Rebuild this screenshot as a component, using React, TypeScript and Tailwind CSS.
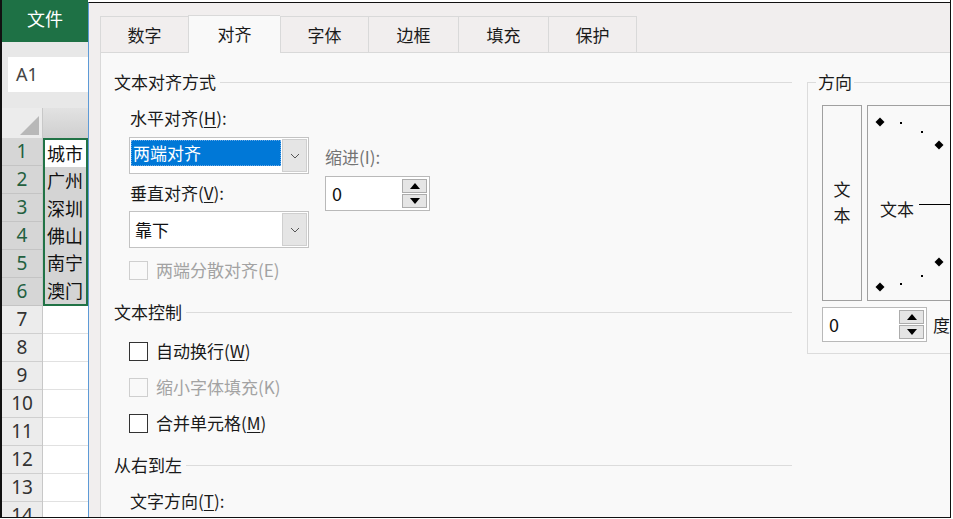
const rows = [
  { n: 1, text: '城市' },
  { n: 2, text: '广州' },
  { n: 3, text: '深圳' },
  { n: 4, text: '佛山' },
  { n: 5, text: '南宁' },
  { n: 6, text: '澳门' },
]
const emptyRows = [7, 8, 9, 10, 11, 12, 13, 14]
const tabs = [
  { label: '数字', w: 'w-[88px]' },
  { label: '对齐', w: 'w-[92px]', active: true },
  { label: '字体', w: 'w-[88px]' },
  { label: '边框', w: 'w-[90px]' },
  { label: '填充', w: 'w-[90px]' },
  { label: '保护', w: 'w-[89px]', last: true },
]

function Chevron() {
  return (
    <svg width="10" height="6" viewBox="0 0 10 6" fill="none">
      <path d="M1 1l4 4 4-4" stroke="#555" strokeWidth="1" />
    </svg>
  )
}

function Combo({ value, selected }: { value: string; selected?: boolean }) {
  return (
    <div className="flex w-[180px] h-[37px] border border-[#c3c3c3] bg-white p-[1px]">
      <div className="flex-1 flex items-center pr-[1px]">
        {selected ? (
          <div className="flex-1 h-[26px] -mt-[5px] bg-[#0078d7] text-white flex items-center pl-[2px] outline outline-1 outline-dotted outline-[#6aa9e6] -outline-offset-1">
            {value}
          </div>
        ) : (
          <span className="pl-[4px] text-[#111]">{value}</span>
        )}
      </div>
      <div className="w-[25px] h-full bg-[#e5e5e5] border border-[#cfcfcf] flex items-center justify-center">
        <Chevron />
      </div>
    </div>
  )
}

function Spin({ className }: { className: string }) {
  return (
    <div className={`flex h-[35px] border border-[#b9b9b9] bg-white p-[1px] ${className}`}>
      <span className="flex-1 pl-[5px] flex items-center text-[18px] text-[#111]">0</span>
      <div className="w-[25px] flex flex-col gap-px mr-[1px] py-[1px]">
        <div className="flex-1 bg-[#e5e5e5] border border-[#acacac] flex items-center justify-center">
          <svg width="10" height="6" viewBox="0 0 10 6"><path d="M0 6L5 0l5 6z" fill="#000" /></svg>
        </div>
        <div className="flex-1 bg-[#e5e5e5] border border-[#acacac] flex items-center justify-center">
          <svg width="10" height="6" viewBox="0 0 10 6"><path d="M0 0l5 6 5-6z" fill="#000" /></svg>
        </div>
      </div>
    </div>
  )
}

function Check({ disabled, children }: { disabled?: boolean; children: React.ReactNode }) {
  return (
    <div className="flex items-center h-[24px] ml-[15px] gap-[8px]">
      <div className={`w-[19px] h-[19px] border ${disabled ? 'border-[#cfcfcf]' : 'border-[#333] bg-white'}`} />
      <span className={disabled ? 'text-[#a3a3a3]' : 'text-[#1a1a1a]'}>{children}</span>
    </div>
  )
}

function Section({ title, className }: { title: string; className: string }) {
  return (
    <div className={`flex items-center h-[24px] ${className}`}>
      <span>{title}</span>
      <div className="flex-1 h-px bg-[#dcdcdc] ml-[4px]" />
    </div>
  )
}

function Diamond({ x, y }: { x: number; y: number }) {
  return <polygon points={`${x},${y - 4.5} ${x + 4.5},${y} ${x},${y + 4.5} ${x - 4.5},${y}`} fill="#000" />
}

export default function App() {
  return (
    <div className="w-[953px] h-[519px] overflow-hidden bg-white font-['Noto_Sans_CJK_SC',sans-serif] text-[17px] text-[#1a1a1a]">
      <div className="flex w-[951px] h-[518px] border-l-2 border-r border-b border-[#111]">
        {/* spreadsheet behind the dialog */}
        <div className="w-[86px] shrink-0 flex flex-col bg-white overflow-hidden">
          <div className="h-[42px] shrink-0 bg-[#1e7145] text-white text-[18px] flex items-center justify-center pb-[6px]">文件</div>
          <div className="h-[66px] shrink-0 bg-[#e8e8e8] pt-[15px] pl-[6px]">
            <div className="h-[35px] bg-white flex items-center pl-[8px] text-[18px] text-[#444] font-['Noto_Sans',sans-serif]">A1</div>
          </div>
          <div className="flex h-[30px] shrink-0">
            <div className="w-[41px] bg-[#ececec] border-r border-[#c8c8c8] flex items-end justify-end p-[3px]">
              <svg width="19" height="19" viewBox="0 0 19 19"><path d="M19 0V19H0z" fill="#b8b8b8" /></svg>
            </div>
            <div className="flex-1 bg-gradient-to-b from-[#e2e2e2] to-[#cfcfcf]" />
          </div>
          <div className="flex shrink-0 font-['Noto_Sans',sans-serif]">
            <div className="w-[41px] flex flex-col border-r border-[#c8c8c8]">
              {rows.map((r) => (
                <div key={r.n} className="h-[28px] shrink-0 bg-[#d6d6d6] border-b border-[#c4c4c4] text-[#23603f] text-[19px] flex items-center justify-center">{r.n}</div>
              ))}
              {emptyRows.map((n) => (
                <div key={n} className="h-[28px] shrink-0 bg-[#ececec] border-b border-[#cfcfcf] text-[#333] text-[19px] flex items-center justify-center">{n}</div>
              ))}
            </div>
            <div className="flex-1 flex flex-col">
              <div className="h-[168px] shrink-0 border-2 border-[#217346] flex flex-col">
                {rows.map((r) => (
                  <div key={r.n} className={`flex-1 flex items-center pl-[2px] text-[18px] text-[#111] font-['Noto_Sans_CJK_SC',sans-serif] ${r.n === 1 ? 'bg-white' : 'bg-[#d4d4d4]'}`}>{r.text}</div>
                ))}
              </div>
              {emptyRows.map((n) => (
                <div key={n} className="h-[28px] shrink-0 border-b border-[#e1e1e1]" />
              ))}
            </div>
          </div>
        </div>

        {/* format cells dialog */}
        <div className="flex-1 flex flex-col pt-[2px] bg-white min-w-0">
          <div className="flex-1 flex flex-col border-t border-[#111] border-l border-l-[#5d9ad6] bg-[#f1eeee] min-h-0">
            <div className="flex items-end pl-[11px] pt-[11px] h-[49px] shrink-0">
              {tabs.map((t) => (
                <div
                  key={t.label}
                  className={`${t.w} flex items-center justify-center border-l border-t border-[#d9d9d9] ${t.last ? 'border-r' : ''} ${t.active ? 'h-[38px] bg-[#f9f9f9] relative z-10 -mb-px pb-[2px]' : 'h-[36px] bg-[#f1eeee]'}`}
                >
                  {t.label}
                </div>
              ))}
            </div>
            <div className="flex-1 flex ml-[11px] bg-[#f9f9f9] border-t border-l border-[#d9d9d9] overflow-hidden">
              <div className="w-[691px] shrink-0 pl-[13px] flex flex-col">
                <Section title="文本对齐方式" className="mt-[17px]" />
                <div className="mt-[12px] ml-[16px] h-[24px] flex items-center">
                  水平对齐(<span className="underline underline-offset-2">H</span>):
                </div>
                <div className="flex mt-[7px] ml-[15px]">
                  <div className="flex flex-col">
                    <Combo value="两端对齐" selected />
                    <div className="mt-[7px] ml-[1px] h-[24px] flex items-center">
                      垂直对齐(<span className="underline underline-offset-2">V</span>):
                    </div>
                    <div className="mt-[6px]">
                      <Combo value="靠下" />
                    </div>
                  </div>
                  <div className="ml-[16px] flex flex-col">
                    <div className="mt-[8px] h-[24px] flex items-center text-[#747474]">缩进(I):</div>
                    <Spin className="mt-[7px] w-[105px]" />
                  </div>
                </div>
                <div className="mt-[10px]">
                  <Check disabled>两端分散对齐(E)</Check>
                </div>
                <Section title="文本控制" className="mt-[18px]" />
                <div className="mt-[15px]">
                  <Check>
                    自动换行(<span className="underline underline-offset-2">W</span>)
                  </Check>
                </div>
                <div className="mt-[12px]">
                  <Check disabled>缩小字体填充(K)</Check>
                </div>
                <div className="mt-[12px]">
                  <Check>
                    合并单元格(<span className="underline underline-offset-2">M</span>)
                  </Check>
                </div>
                <Section title="从右到左" className="mt-[18px]" />
                <div className="mt-[12px] ml-[16px] h-[24px] flex items-center">
                  文字方向(<span className="underline underline-offset-2">T</span>):
                </div>
              </div>

              <fieldset className="ml-[15px] mt-[17px] w-[220px] shrink-0 h-[284px] border border-[#dcdcdc] self-start">
                <legend className="ml-[8px] px-[2px] h-[24px] leading-[24px]">方向</legend>
                <div className="pl-[14px]">
                  <div className="flex gap-[5px] mt-[11px]">
                    <div className="w-[40px] h-[196px] border border-[#a0a0a0] flex flex-col items-center justify-center leading-[26px] pb-[2px]">
                      <span>文</span>
                      <span>本</span>
                    </div>
                    <div className="w-[140px] h-[196px] border border-[#a0a0a0]">
                      <svg width="138" height="194" viewBox="0 0 138 194">
                        <Diamond x={12} y={16} />
                        <rect x={32} y={16} width={2} height={2} fill="#000" />
                        <rect x={53} y={25} width={2} height={2} fill="#000" />
                        <Diamond x={71} y={39} />
                        <Diamond x={71} y={156} />
                        <rect x={53} y={169} width={2} height={2} fill="#000" />
                        <rect x={32} y={177} width={2} height={2} fill="#000" />
                        <Diamond x={12} y={181} />
                        <line x1={51} y1={98.5} x2={138} y2={98.5} stroke="#000" strokeWidth="1" />
                        <text x={12} y={110} fontSize="17" fontFamily="Noto Sans CJK SC, sans-serif" fill="#1a1a1a">文本</text>
                      </svg>
                    </div>
                  </div>
                  <div className="flex items-center mt-[6px]">
                    <Spin className="w-[105px]" />
                    <span className="ml-[6px]">度</span>
                  </div>
                </div>
              </fieldset>
            </div>
          </div>
        </div>
      </div>
    </div>
  )
}
